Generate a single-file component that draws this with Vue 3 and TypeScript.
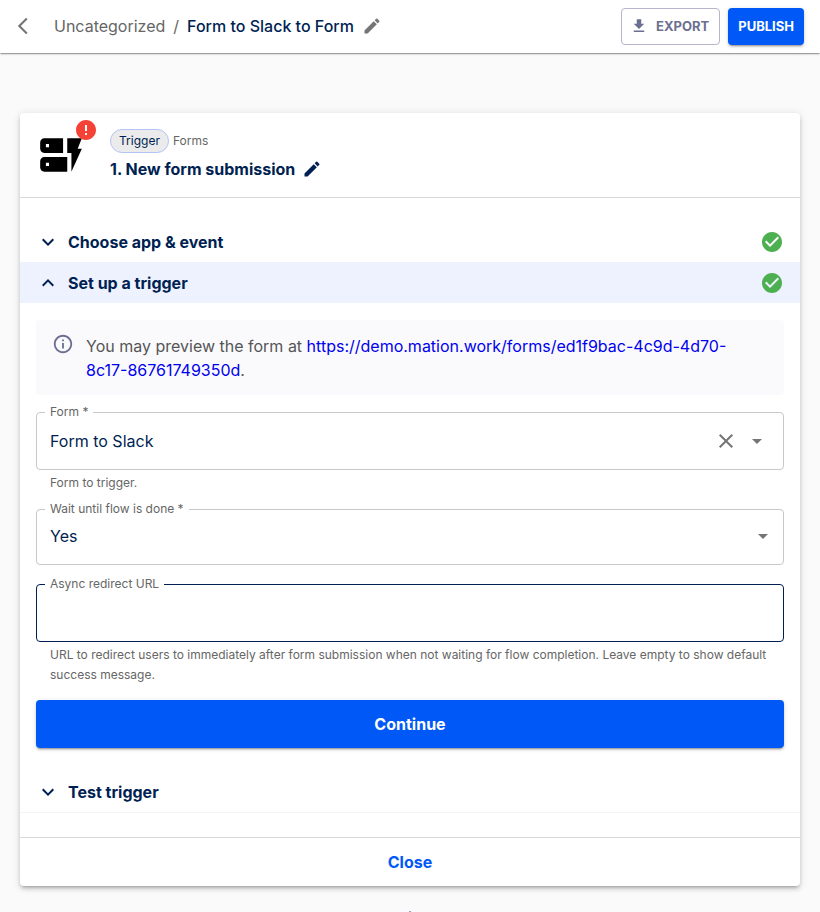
<script setup lang="ts">
import { ref } from 'vue'

const form = ref('Form to Slack')
const waitUntilDone = ref('yes')
const redirectUrl = ref('')
const previewUrl = 'https://demo.mation.work/forms/ed1f9bac-4c9d-4d70-8c17-86761749350d'
</script>

<template>
  <div class="page">
    <header class="topbar">
      <button class="icon-btn back" type="button" aria-label="Back">
        <svg width="24" height="24" viewBox="0 0 24 24"><path d="M17.51 3.87 15.73 2.1 5.84 12l9.9 9.9 1.77-1.77L9.38 12z" /></svg>
      </button>
      <nav class="crumbs">
        <a class="folder" href="#">Uncategorized</a>
        <span class="slash">/</span>
        <h1 class="flow-name">Form to Slack to Form</h1>
        <button class="icon-btn" type="button" aria-label="Edit flow name">
          <svg width="20" height="20" viewBox="0 0 24 24"><path d="M3 17.25V21h3.75L17.81 9.94l-3.75-3.75zM20.71 7.04c.39-.39.39-1.02 0-1.41l-2.34-2.34a.9959.9959 0 0 0-1.41 0l-1.83 1.83 3.75 3.75z" /></svg>
        </button>
      </nav>
      <div class="actions">
        <button class="btn outlined" type="button">
          <svg width="18" height="18" viewBox="0 0 24 24"><path d="M5 20h14v-2H5zM19 9h-4V3H9v6H5l7 7z" /></svg>
          EXPORT
        </button>
        <button class="btn filled" type="button">PUBLISH</button>
      </div>
    </header>

    <main class="canvas">
      <section class="card">
        <div class="card-head">
          <div class="app-icon">
            <svg width="50" height="50" viewBox="0 0 24 24"><path d="M17 20v-9h-2V4h7l-2 5h2zm-2-7v7H4c-1.1 0-2-.9-2-2v-3c0-1.1.9-2 2-2zm-8.75 2.75h-1.5v1.5h1.5zM13 4v7H4c-1.1 0-2-.9-2-2V6c0-1.1.9-2 2-2zM6.25 6.75h-1.5v1.5h1.5z" /></svg>
            <svg class="error-badge" width="24" height="24" viewBox="0 0 24 24"><path d="M12 2C6.48 2 2 6.48 2 12s4.48 10 10 10 10-4.48 10-10S17.52 2 12 2m1 15h-2v-2h2zm0-4h-2V7h2z" /></svg>
          </div>
          <div class="step-info">
            <div class="step-meta">
              <span class="chip">Trigger</span>
              <span class="app-name">Forms</span>
            </div>
            <div class="step-title">
              <h2>1. New form submission</h2>
              <button class="icon-btn dark" type="button" aria-label="Edit step name">
                <svg width="20" height="20" viewBox="0 0 24 24"><path d="M3 17.25V21h3.75L17.81 9.94l-3.75-3.75zM20.71 7.04c.39-.39.39-1.02 0-1.41l-2.34-2.34a.9959.9959 0 0 0-1.41 0l-1.83 1.83 3.75 3.75z" /></svg>
              </button>
            </div>
          </div>
        </div>

        <div class="steps">
          <button class="row" type="button" aria-expanded="false">
            <svg class="chevron" width="24" height="24" viewBox="0 0 24 24"><path d="M16.59 8.59 12 13.17 7.41 8.59 6 10l6 6 6-6z" /></svg>
            <span>Choose app &amp; event</span>
            <svg class="check" width="24" height="24" viewBox="0 0 24 24"><path d="M12 2C6.48 2 2 6.48 2 12s4.48 10 10 10 10-4.48 10-10S17.52 2 12 2m-2 15-5-5 1.41-1.41L10 14.17l7.59-7.59L19 8z" /></svg>
          </button>
          <button class="row open" type="button" aria-expanded="true">
            <svg class="chevron" width="24" height="24" viewBox="0 0 24 24"><path d="m12 8-6 6 1.41 1.41L12 10.83l4.59 4.58L18 14z" /></svg>
            <span>Set up a trigger</span>
            <svg class="check" width="24" height="24" viewBox="0 0 24 24"><path d="M12 2C6.48 2 2 6.48 2 12s4.48 10 10 10 10-4.48 10-10S17.52 2 12 2m-2 15-5-5 1.41-1.41L10 14.17l7.59-7.59L19 8z" /></svg>
          </button>

          <form class="setup" @submit.prevent>
            <div class="notice">
              <svg width="22" height="22" viewBox="0 0 24 24"><path d="M11 7h2v2h-2zm0 4h2v6h-2zm1-9C6.48 2 2 6.48 2 12s4.48 10 10 10 10-4.48 10-10S17.52 2 12 2m0 18c-4.41 0-8-3.59-8-8s3.59-8 8-8 8 3.59 8 8-3.59 8-8 8" /></svg>
              <p>You may preview the form at <a :href="previewUrl">{{ previewUrl }}</a>.</p>
            </div>

            <fieldset class="field">
              <legend><label for="form">Form *</label></legend>
              <div class="control">
                <input id="form" v-model="form" type="text" />
                <button class="icon-btn" type="button" aria-label="Clear" @click="form = ''">
                  <svg width="24" height="24" viewBox="0 0 24 24"><path d="M19 6.41 17.59 5 12 10.59 6.41 5 5 6.41 10.59 12 5 17.59 6.41 19 12 13.41 17.59 19 19 17.59 13.41 12z" /></svg>
                </button>
                <button class="icon-btn" type="button" aria-label="Open">
                  <svg width="24" height="24" viewBox="0 0 24 24"><path d="m7 10 5 5 5-5z" /></svg>
                </button>
              </div>
            </fieldset>
            <p class="helper">Form to trigger.</p>

            <fieldset class="field">
              <legend><label for="wait">Wait until flow is done *</label></legend>
              <div class="control select">
                <select id="wait" v-model="waitUntilDone">
                  <option value="yes">Yes</option>
                  <option value="no">No</option>
                </select>
                <svg width="24" height="24" viewBox="0 0 24 24"><path d="m7 10 5 5 5-5z" /></svg>
              </div>
            </fieldset>

            <fieldset class="field active">
              <legend><label for="redirect">Async redirect URL</label></legend>
              <div class="control">
                <input id="redirect" v-model="redirectUrl" type="text" />
              </div>
            </fieldset>
            <p class="helper">URL to redirect users to immediately after form submission when not waiting for flow completion. Leave empty to show default success message.</p>

            <button class="continue" type="submit">Continue</button>
          </form>

          <button class="row last" type="button" aria-expanded="false">
            <svg class="chevron" width="24" height="24" viewBox="0 0 24 24"><path d="M16.59 8.59 12 13.17 7.41 8.59 6 10l6 6 6-6z" /></svg>
            <span>Test trigger</span>
          </button>
        </div>

        <button class="close" type="button">Close</button>
      </section>
      <div class="connector"></div>
    </main>
  </div>
</template>

<style>
body {
  background: #fafafa;
}
</style>

<style scoped>
.page {
  min-height: 100vh;
  font-family: Inter, "Liberation Sans", sans-serif;
  font-size: 16px;
  line-height: 24px;
  color: #001f52;
}
.page *,
.page {
  box-sizing: border-box;
}
button,
input,
select {
  font: inherit;
  color: inherit;
  border: 0;
  background: none;
  padding: 0;
  margin: 0;
}
button {
  cursor: pointer;
}
svg {
  display: block;
  flex: none;
  fill: currentColor;
}
h1,
h2,
p {
  margin: 0;
}
.icon-btn {
  display: flex;
  color: #757575;
}
.icon-btn.dark {
  color: #001f52;
}
.topbar {
  display: flex;
  align-items: center;
  height: 53px;
  padding: 0 16px 0 13px;
  background: #fff;
  box-shadow: 0 2px 1px -1px rgba(0, 0, 0, 0.2), 0 1px 1px rgba(0, 0, 0, 0.14), 0 1px 3px rgba(0, 0, 0, 0.12);
}
.back {
  padding-bottom: 1px;
}
.back svg {
  width: 20px;
  height: 20px;
}
.crumbs {
  display: flex;
  align-items: center;
  gap: 8px;
  flex: 1;
  margin-left: 21px;
  padding-bottom: 1px;
}
.folder,
.slash {
  color: #666;
  text-decoration: none;
}
.flow-name {
  font-size: 16px;
  font-weight: 500;
}
.actions {
  display: flex;
  gap: 8px;
}
.btn {
  display: flex;
  align-items: center;
  gap: 8px;
  height: 37px;
  padding: 0 10px 1px;
  border-radius: 4px;
  font-size: 13px;
  font-weight: 700;
}
.outlined {
  padding-left: 8px;
  border: 1px solid #b5b5cc;
  color: #6b6f91;
}
.filled,
.continue {
  background: #0059f7;
  color: #fff;
  box-shadow: 0 3px 1px -2px rgba(0, 0, 0, 0.2), 0 2px 2px rgba(0, 0, 0, 0.14), 0 1px 5px rgba(0, 0, 0, 0.12);
}
.canvas {
  padding: 60px 20px 0;
}
.card {
  background: #fff;
  border-radius: 4px;
  box-shadow: 0 3px 3px -2px rgba(0, 0, 0, 0.2), 0 3px 4px rgba(0, 0, 0, 0.14), 0 1px 8px rgba(0, 0, 0, 0.12);
}
.card-head {
  display: flex;
  align-items: center;
  gap: 24px;
  padding: 16px;
  border-bottom: 1px solid #d9d9d9;
}
.app-icon {
  position: relative;
  color: #000;
}
.error-badge {
  position: absolute;
  top: -12px;
  right: -12px;
  color: #f44336;
}
.step-info {
  display: flex;
  flex-direction: column;
  gap: 4px;
}
.step-meta {
  display: flex;
  align-items: center;
  gap: 4px;
  font-size: 12px;
}
.chip {
  height: 24px;
  padding: 0 8px;
  border: 1px solid #b3c5f7;
  border-radius: 12px;
  background: #ebebeb;
  line-height: 22px;
}
.app-name {
  color: #666;
}
.step-title {
  display: flex;
  align-items: center;
  gap: 7px;
}
.step-title h2 {
  font-size: 16px;
  font-weight: 700;
}
.steps {
  padding: 23px 0 24px;
  border-bottom: 1px solid #d9d9d9;
}
.row {
  display: flex;
  align-items: center;
  gap: 8px;
  width: 100%;
  height: 41px;
  padding: 0 16px;
  font-weight: 700;
  text-align: left;
}
.row.open {
  background: #eef2ff;
}
.row.last {
  border-bottom: 1px solid #f5f5f5;
}
.check {
  margin-left: auto;
  color: #4caf50;
}
.setup {
  display: flex;
  flex-direction: column;
  padding: 17px 16px 24px;
}
.notice {
  display: flex;
  gap: 12px;
  margin-bottom: 10px;
  padding: 13px 32px 13px 16px;
  border-radius: 4px;
  background: #fafafd;
  color: #555;
}
.notice svg {
  color: #6b6f91;
}
.notice p {
  padding-top: 1px;
  overflow-wrap: anywhere;
}
.notice a {
  color: #0000ee;
  text-decoration: none;
}
.field {
  min-width: 0;
  margin: 0;
  padding: 0 14px 6px 8px;
  border: 1px solid #c8c8c8;
  border-radius: 4px;
}
.field.active {
  margin-top: 12px;
  border-color: #001f52;
}
legend {
  padding: 0 5px;
  color: #666;
  font-size: 12px;
  line-height: 14px;
}
legend label {
  display: block;
}
.control {
  display: flex;
  align-items: center;
  gap: 7px;
  padding-left: 5px;
}
.control input,
.control select {
  flex: 1;
  min-width: 0;
  height: 44px;
  outline: 0;
  appearance: none;
}
.control.select {
  display: grid;
  margin: 0 -6px 2px 0;
}
.select select,
.select svg {
  grid-area: 1 / 1;
}
.select select {
  height: 40px;
}
.select svg {
  justify-self: end;
  color: #757575;
  pointer-events: none;
}
.helper {
  padding: 3px 14px 9px;
  color: #666;
  font-size: 12px;
  line-height: 20px;
}
.continue {
  height: 48px;
  margin-top: 6px;
  border-radius: 4px;
  font-weight: 700;
}
.close {
  display: block;
  width: 100%;
  height: 48px;
  color: #0059f7;
  font-weight: 700;
}
.connector {
  width: 2px;
  height: 1px;
  margin: 25px auto 0;
  background: #8fa3cc;
}
</style>
